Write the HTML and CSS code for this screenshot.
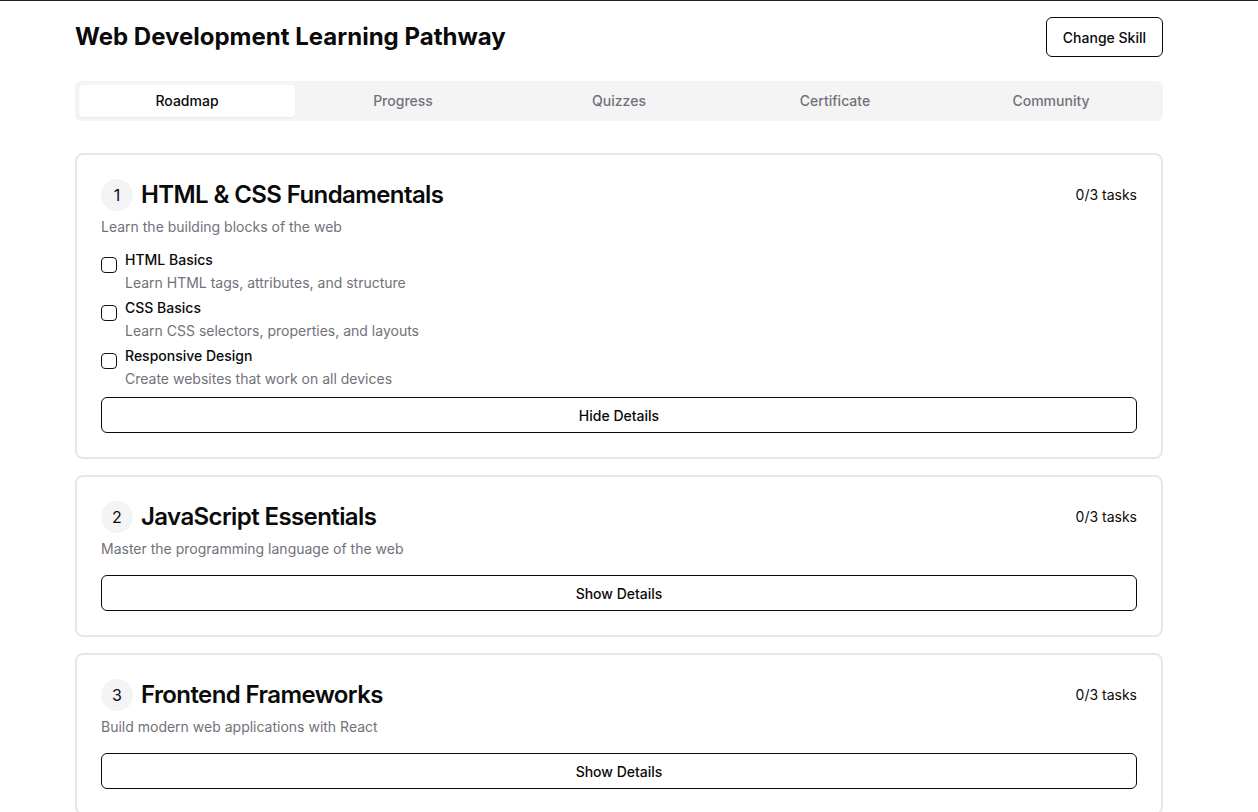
FILE: index.html
```html
<!DOCTYPE html>
<html lang="en">
<head>
<meta charset="utf-8">
<title>Web Development Learning Pathway</title>
<link rel="stylesheet" href="styles.css">
</head>
<body>
<div class="page">
  <header class="topbar">
    <h1 class="page-title">Web Development Learning Pathway</h1>
    <button class="btn-outline btn-change">Change Skill</button>
  </header>

  <nav class="tabs">
    <div class="tab active">Roadmap</div>
    <div class="tab">Progress</div>
    <div class="tab">Quizzes</div>
    <div class="tab">Certificate</div>
    <div class="tab">Community</div>
  </nav>

  <main class="modules">
    <section class="card">
      <div class="card-head">
        <div class="card-title-wrap">
          <span class="step">1</span>
          <h2 class="card-title">HTML &amp; CSS Fundamentals</h2>
        </div>
        <span class="count">0/3 tasks</span>
      </div>
      <p class="card-desc">Learn the building blocks of the web</p>
      <div class="card-body">
        <div class="task">
          <span class="check"></span>
          <div class="task-text">
            <div class="task-name">HTML Basics</div>
            <div class="task-desc">Learn HTML tags, attributes, and structure</div>
          </div>
        </div>
        <div class="task">
          <span class="check"></span>
          <div class="task-text">
            <div class="task-name">CSS Basics</div>
            <div class="task-desc">Learn CSS selectors, properties, and layouts</div>
          </div>
        </div>
        <div class="task">
          <span class="check"></span>
          <div class="task-text">
            <div class="task-name">Responsive Design</div>
            <div class="task-desc">Create websites that work on all devices</div>
          </div>
        </div>
        <button class="btn-outline btn-full">Hide Details</button>
      </div>
    </section>

    <section class="card">
      <div class="card-head">
        <div class="card-title-wrap">
          <span class="step">2</span>
          <h2 class="card-title">JavaScript Essentials</h2>
        </div>
        <span class="count">0/3 tasks</span>
      </div>
      <p class="card-desc">Master the programming language of the web</p>
      <div class="card-body">
        <button class="btn-outline btn-full">Show Details</button>
      </div>
    </section>

    <section class="card">
      <div class="card-head">
        <div class="card-title-wrap">
          <span class="step">3</span>
          <h2 class="card-title">Frontend Frameworks</h2>
        </div>
        <span class="count">0/3 tasks</span>
      </div>
      <p class="card-desc">Build modern web applications with React</p>
      <div class="card-body">
        <button class="btn-outline btn-full">Show Details</button>
      </div>
    </section>
  </main>
</div>
</body>
</html>
```

FILE: styles.css
```css
* {
  box-sizing: border-box;
}

html {
  border-top: 1px solid #1f1f1f;
  overflow-y: scroll;
}

html::-webkit-scrollbar {
  width: 15px;
  background: #f1f1f1;
}

html::-webkit-scrollbar-thumb {
  background: #8a8a8a;
  border: 4px solid #f1f1f1;
  border-radius: 8px;
}

body {
  margin: 0;
  background: #ffffff;
  color: #0a0a0a;
  font-family: Inter, "Noto Sans", "Liberation Sans", sans-serif;
  font-size: 14px;
  line-height: 20px;
}

.page {
  max-width: 1088px;
  margin: 0 auto 0 75px;
  padding: 16px 0 180px;
}

.topbar {
  display: flex;
  align-items: center;
  justify-content: space-between;
  height: 40px;
}

.page-title {
  margin: 0;
  font-size: 24px;
  line-height: 32px;
  font-weight: 700;
}

.btn-outline {
  font-family: inherit;
  font-size: 14px;
  font-weight: 500;
  color: #0a0a0a;
  background: #ffffff;
  border: 1px solid #0a0a0a;
  border-radius: 6px;
  cursor: pointer;
}

.btn-change {
  height: 40px;
  padding: 0 16px;
}

.tabs {
  margin-top: 24px;
  display: grid;
  grid-template-columns: repeat(5, 1fr);
  height: 40px;
  padding: 4px;
  background: #f4f4f5;
  border-radius: 6px;
}

.tab {
  display: flex;
  align-items: center;
  justify-content: center;
  border-radius: 4px;
  font-weight: 500;
  color: #71717a;
}

.tab.active {
  background: #ffffff;
  color: #0a0a0a;
  box-shadow: 0 1px 2px rgba(0, 0, 0, 0.05);
}

.modules {
  margin-top: 32px;
  display: flex;
  flex-direction: column;
  gap: 16px;
}

.card {
  border: 2px solid #e5e7eb;
  border-radius: 8px;
  padding: 24px;
  background: #ffffff;
}

.card-head {
  display: flex;
  align-items: center;
  justify-content: space-between;
}

.card-title-wrap {
  display: flex;
  align-items: center;
  gap: 8px;
}

.step {
  width: 32px;
  height: 32px;
  border-radius: 50%;
  background: #f3f4f6;
  display: flex;
  align-items: center;
  justify-content: center;
  font-size: 16px;
}

.card-title {
  margin: 0;
  font-size: 24px;
  line-height: 32px;
  font-weight: 600;
  letter-spacing: -0.6px;
}

.count {
  font-size: 14px;
}

.card-desc {
  margin: 6px 0 0;
  color: #71717a;
}

.card-body {
  margin-top: 16px;
  display: flex;
  flex-direction: column;
  gap: 8px;
}

.task {
  display: flex;
  align-items: flex-start;
  gap: 8px;
}

.check {
  flex: none;
  width: 16px;
  height: 16px;
  margin-top: 4px;
  border: 1.5px solid #111111;
  border-radius: 4px;
  background: #ffffff;
}

.task-name {
  font-weight: 500;
  line-height: 14px;
}

.task-desc {
  margin-top: 6px;
  color: #71717a;
}

.btn-full {
  width: 100%;
  height: 36px;
}
```
